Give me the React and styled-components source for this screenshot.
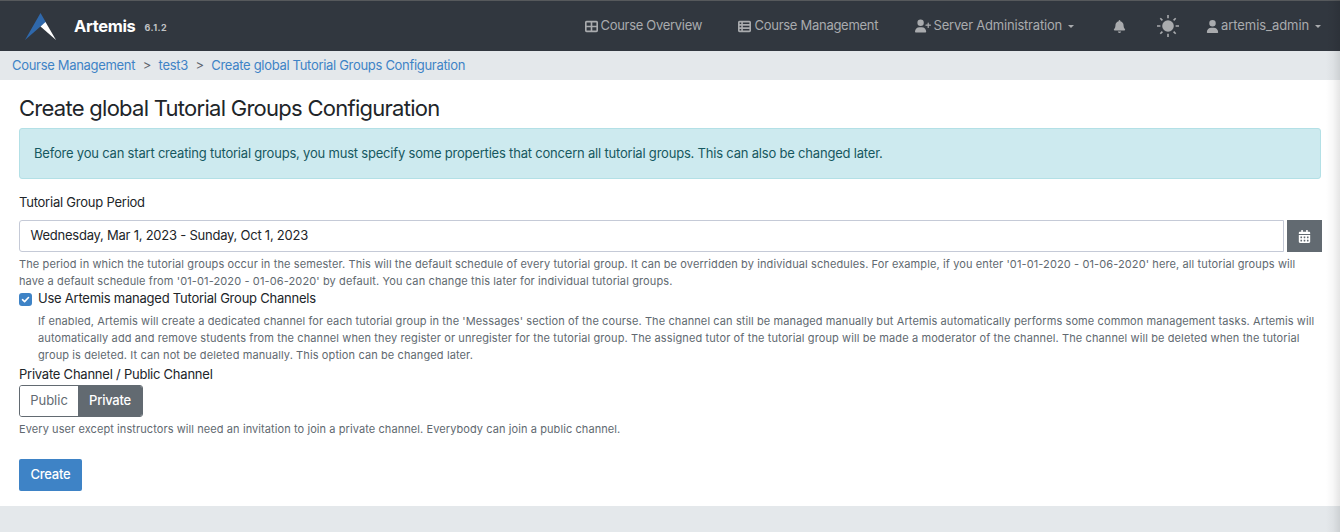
import React from 'react';
import styled, { createGlobalStyle } from 'styled-components';
import { FaTableCellsLarge, FaTableList, FaUserPlus, FaBell, FaUser } from 'react-icons/fa6';
import { FaCalendarAlt } from 'react-icons/fa';

const GlobalStyle = createGlobalStyle`
  *, *::before, *::after { box-sizing: border-box; }
  body {
    margin: 0;
    background: #e4e8eb;
    color: #212529;
    font-family: Inter, "Liberation Sans", sans-serif;
    font-size: 13px;
    line-height: 20px;
    letter-spacing: -0.2px;
    overflow: hidden;
  }
  h1, p { margin: 0; font-weight: 400; }
  svg { display: block; flex: none; }
`;

const Page = styled.div`
  position: relative;
  height: 532px;
  display: flex;
  flex-direction: column;
`;

const EdgeShade = styled.div`
  position: absolute;
  top: 0;
  right: 0;
  bottom: 0;
  width: 14px;
  background: linear-gradient(to right, rgba(0, 0, 0, 0), rgba(0, 0, 0, 0.03) 50%, rgba(0, 0, 0, 0.1));
  pointer-events: none;
`;

const Navbar = styled.header`
  height: 51px;
  display: flex;
  align-items: center;
  background: #31373f;
  border-top: 1px solid #56595c;
  color: #a9abae;
  padding: 0 20px 0 25px;
`;

const Brand = styled.a`
  display: flex;
  align-items: center;
  flex: 1;
  color: #fff;
`;

const BrandName = styled.span`
  margin-left: 18px;
  font-size: 16.5px;
  font-weight: 700;
  letter-spacing: -0.35px;
`;

const Version = styled.span`
  margin: 3px 0 0 9px;
  font-size: 9px;
  font-weight: 700;
  letter-spacing: 0.5px;
  color: #c0c2c4;
`;

const NavItem = styled.a`
  display: flex;
  align-items: center;
  gap: ${({ $gap }) => $gap || 3}px;
  width: ${({ $w }) => $w}px;
  white-space: nowrap;
  letter-spacing: ${({ $ls }) => $ls || 0}px;
`;

const NavText = styled.span`
  padding-bottom: 2px;
`;

const Caret = styled.i`
  margin-left: 3px;
  border: 3px solid transparent;
  border-top-color: currentColor;
  border-bottom: 0;
`;

const Breadcrumbs = styled.nav`
  height: 29px;
  display: flex;
  align-items: center;
  padding: 0 0 2px 12px;
  gap: 7.5px;
  color: #5d656d;
`;

const Crumb = styled.a`
  color: #3e83c6;
  letter-spacing: -0.31px;
`;

const Content = styled.main`
  height: 426px;
  background: #fff;
  padding: 14px 18px 0 19px;
  display: flex;
  flex-direction: column;
  align-items: stretch;
`;

const Title = styled.h1`
  height: 34px;
  line-height: 29px;
  font-size: 22px;
  letter-spacing: -0.73px;
`;

const Alert = styled.p`
  height: 51px;
  width: 1302px;
  padding: 14px;
  border: 1px solid #b3e0e6;
  border-radius: 3px;
  background: #cdeaef;
  color: #165860;
`;

const Label = styled.label`
  height: 20px;
  margin-top: ${({ $mt }) => $mt || 0}px;
  line-height: 18px;
  letter-spacing: -0.23px;
`;

const PeriodRow = styled.div`
  display: flex;
  gap: 3px;
  margin-top: 7px;
`;

const PeriodField = styled.div`
  width: 1265px;
  height: 32px;
  padding: 4px 10.5px;
  border: 1px solid #c5cad7;
  border-radius: 3px 0 0 3px;
  letter-spacing: -0.23px;
`;

const CalendarButton = styled.button`
  width: 35px;
  height: 32px;
  padding: 0;
  display: grid;
  place-items: center;
  border: 0;
  background: #626a71;
  color: #fff;
`;

const Help = styled.p`
  margin: ${({ $mt }) => $mt || 0}px 0 0 ${({ $indent }) => $indent || 0}px;
  font-size: 11px;
  line-height: 17px;
  color: #616970;
  white-space: nowrap;
`;

const HelpLine = styled.span`
  display: block;
  letter-spacing: ${({ $ls }) => $ls || 0.11}px;
`;

const CheckRow = styled.div`
  display: flex;
  align-items: center;
  gap: 6px;
  height: 18px;
`;

const Checkbox = styled.span`
  width: 13px;
  height: 13px;
  display: grid;
  place-items: center;
  border-radius: 3px;
  background: #3e83c6;
`;

const Toggle = styled.div`
  display: flex;
  align-self: flex-start;
  height: 32px;
  border: 1px solid #626a71;
  border-radius: 3px;
  overflow: hidden;
`;

const ToggleOption = styled.button`
  width: ${({ $w }) => $w}px;
  padding: 0 0 2px;
  border: 0;
  font: inherit;
  font-weight: ${({ $active }) => ($active ? 500 : 400)};
  letter-spacing: ${({ $active }) => ($active ? -0.25 : 0)}px;
  background: ${({ $active }) => ($active ? '#626a71' : '#fff')};
  color: ${({ $active }) => ($active ? '#fff' : '#626a71')};
`;

const CreateButton = styled.button`
  width: 63px;
  height: 32px;
  margin-top: 21px;
  padding: 0 0 2px;
  border: 0;
  border-radius: 2px;
  font: inherit;
  font-weight: 500;
  letter-spacing: -0.25px;
  background: #3e83c6;
  color: #fff;
`;

const Logo = () => (
  <svg width="31" height="27" viewBox="0 0 31 27">
    <path d="M15.5 0L21 9.5L15.5 13.5L0 27Z" fill="#2f68ab" />
    <path d="M20.5 9L31 27L15.5 13.5Z" fill="#fff" />
  </svg>
);

const Sun = () => (
  <svg width="22" height="22" viewBox="0 0 22 22" stroke="currentColor" strokeWidth="1.6">
    <circle cx="11" cy="11" r="5.8" fill="currentColor" stroke="none" />
    <path d="M11 0v3.2M11 18.8V22M0 11h3.4M18.6 11H22M3.3 3.3l2.1 2.1M16.6 16.6l2.1 2.1M3.3 18.7l2.1-2.1M16.6 5.4l2.1-2.1" />
  </svg>
);

export default function App() {
  return (
    <Page>
      <GlobalStyle />
      <Navbar>
        <Brand>
          <Logo />
          <BrandName>Artemis</BrandName>
          <Version>6.1.2</Version>
        </Brand>
        <NavItem $w={153} $ls={-0.3}><FaTableCellsLarge size={13} /><NavText>Course Overview</NavText></NavItem>
        <NavItem $w={177} $ls={-0.28} $gap={4}><FaTableList size={13} /><NavText>Course Management</NavText></NavItem>
        <NavItem $w={198} $ls={-0.2}><FaUserPlus size={16} /><NavText>Server Administration</NavText><Caret /></NavItem>
        <NavItem $w={44}><FaBell size={13} /></NavItem>
        <NavItem $w={49}><Sun /></NavItem>
        <NavItem $w={114.5} $ls={-0.06} $gap={2.5}><FaUser size={13} /><NavText>artemis_admin</NavText><Caret /></NavItem>
      </Navbar>
      <Breadcrumbs>
        <Crumb>Course Management</Crumb>
        <span>&gt;</span>
        <Crumb>test3</Crumb>
        <span>&gt;</span>
        <Crumb>Create global Tutorial Groups Configuration</Crumb>
      </Breadcrumbs>
      <Content>
        <Title>Create global Tutorial Groups Configuration</Title>
        <Alert>Before you can start creating tutorial groups, you must specify some properties that concern all tutorial groups. This can also be changed later.</Alert>
        <Label $mt={14}>Tutorial Group Period</Label>
        <PeriodRow>
          <PeriodField>Wednesday, Mar 1, 2023 - Sunday, Oct 1, 2023</PeriodField>
          <CalendarButton aria-label="Choose period"><FaCalendarAlt size={13} /></CalendarButton>
        </PeriodRow>
        <Help $mt={4}>
          <HelpLine>The period in which the tutorial groups occur in the semester. This will the default schedule of every tutorial group. It can be overridden by individual schedules. For example, if you enter '01-01-2020 - 01-06-2020' here, all tutorial groups will</HelpLine>
          <HelpLine $ls={0.12}>have a default schedule from '01-01-2020 - 01-06-2020' by default. You can change this later for individual tutorial groups.</HelpLine>
        </Help>
        <CheckRow>
          <Checkbox>
            <svg width="9" height="9" viewBox="0 0 9 9" fill="none" stroke="#fff" strokeWidth="1.6" strokeLinecap="round" strokeLinejoin="round"><path d="M1.5 4.7L3.6 6.6L7.5 2.5" /></svg>
          </Checkbox>
          <Label>Use Artemis managed Tutorial Group Channels</Label>
        </CheckRow>
        <Help $mt={5} $indent={19}>
          <HelpLine $ls={0.1}>If enabled, Artemis will create a dedicated channel for each tutorial group in the 'Messages' section of the course. The channel can still be managed manually but Artemis automatically performs some common management tasks. Artemis will</HelpLine>
          <HelpLine>automatically add and remove students from the channel when they register or unregister for the tutorial group. The assigned tutor of the tutorial group will be made a moderator of the channel. The channel will be deleted when the tutorial</HelpLine>
          <HelpLine>group is deleted. It can not be deleted manually. This option can be changed later.</HelpLine>
        </Help>
        <Label $mt={1}>Private Channel / Public Channel</Label>
        <Toggle>
          <ToggleOption $w={58}>Public</ToggleOption>
          <ToggleOption $w={64} $active>Private</ToggleOption>
        </Toggle>
        <Help $mt={4}>
          <HelpLine $ls={0.085}>Every user except instructors will need an invitation to join a private channel. Everybody can join a public channel.</HelpLine>
        </Help>
        <CreateButton>Create</CreateButton>
      </Content>
      <EdgeShade />
    </Page>
  );
}
